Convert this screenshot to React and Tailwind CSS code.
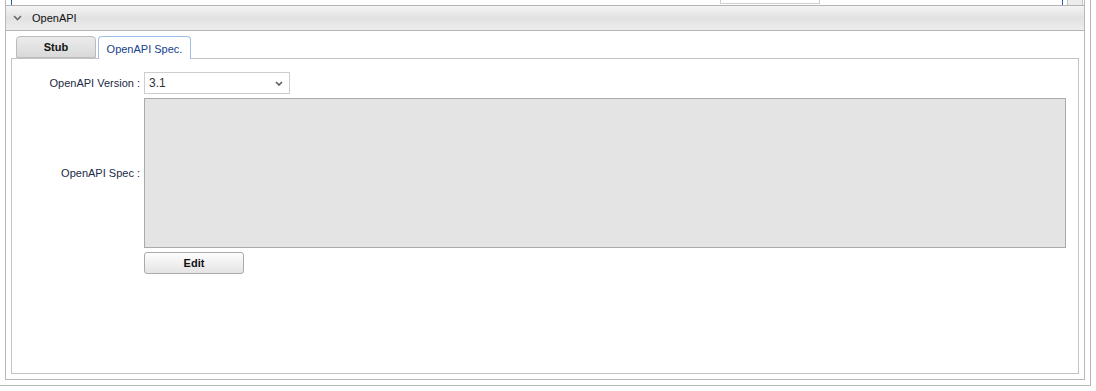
import { useState } from 'react'

// OpenAPI panel: collapsible header, two tabs, spec form.
function Chevron() {
  return (
    <svg width="9" height="6" viewBox="0 0 9 6" className="shrink-0">
      <polyline points="1,1 4.5,4.5 8,1" fill="none" stroke="#6b6b6b" strokeWidth="1.6" />
    </svg>
  )
}

function SelectArrow() {
  return (
    <svg width="8" height="5" viewBox="0 0 8 5">
      <polyline points="1,1 4,4 7,1" fill="none" stroke="#555" strokeWidth="1.5" />
    </svg>
  )
}

export default function App() {
  const [tab, setTab] = useState('spec')
  const [version, setVersion] = useState('3.1')

  return (
    <div className="h-[391px] w-[1096px] overflow-hidden bg-white font-['Liberation_Sans',Arial,sans-serif] text-[11px]">
      <div className="h-[386px] w-[1091px] border-b border-r border-[#b8b8b8]">
        <div className="ml-[5px] flex h-[380px] w-[1080px] flex-col border-x border-b border-[#b8b8b8]">
          {/* tail of the grid above */}
          <div className="flex h-[5px] shrink-0">
            <div className="ml-[5px] w-px bg-[#1b5fb5]" />
            <div className="ml-[708px] h-[4px] w-[100px] border-x border-b border-[#cfcfcf]" />
            <div className="ml-[242px] w-px bg-[#1b5fb5]" />
            <div className="ml-[4px] h-[5px] w-[16px] border-x border-[#c4c4c4] bg-[#ececec]" />
          </div>

          {/* header */}
          <div className="flex h-[26px] shrink-0 items-center gap-[10px] border-y border-[#b3b3b3] bg-gradient-to-b from-[#f4f4f4] via-[#e2e2e2] to-[#ededed] pl-[7px]">
            <Chevron />
            <span className="text-[11px] text-[#111]">OpenAPI</span>
          </div>

          {/* body */}
          <div className="flex flex-1 flex-col px-[5px] pb-[5px] pt-[5px]">
            <div className="relative z-10 flex h-[23px] shrink-0 items-stretch gap-[2px] pl-[5px]">
              <button
                onClick={() => setTab('stub')}
                className={
                  tab === 'stub'
                    ? 'w-[80px] rounded-t-[4px] border border-b-0 border-[#9cc0e8] bg-white pt-[2px] text-[11px] text-[#15428b]'
                    : 'mb-px w-[80px] rounded-t-[4px] border border-[#bcbcbc] bg-gradient-to-b from-[#ececec] to-[#d9d9d9] pt-[1px] text-[11px] font-bold text-[#111]'
                }
              >
                Stub
              </button>
              <button
                onClick={() => setTab('spec')}
                className={
                  tab === 'spec'
                    ? 'w-[93px] rounded-t-[4px] border border-b-0 border-[#9cc0e8] bg-white pt-[2px] text-[11px] text-[#15428b]'
                    : 'mb-px w-[93px] rounded-t-[4px] border border-[#bcbcbc] bg-gradient-to-b from-[#ececec] to-[#d9d9d9] pt-[1px] text-[11px] font-bold text-[#111]'
                }
              >
                OpenAPI Spec.
              </button>
            </div>

            <div className="-mt-px flex flex-1 flex-col gap-[4px] border border-[#c4c4c4] pt-[13px]">
              <div className="flex items-center">
                <label className="w-[132px] shrink-0 pr-[4px] text-right text-[11px] text-[#1c2a45]">
                  OpenAPI Version :
                </label>
                <div className="flex h-[22px] w-[146px] items-center justify-between border border-[#cdcdcd] bg-white pl-[4px] pr-[6px]">
                  <span className="text-[12px] text-[#333]">{version}</span>
                  <SelectArrow />
                </div>
              </div>

              <div className="flex items-center">
                <label className="w-[132px] shrink-0 pr-[4px] text-right text-[11px] text-[#1c2a45]">
                  OpenAPI Spec :
                </label>
                <div className="h-[150px] w-[922px] border border-[#aaaaaa] bg-[#e4e4e4]" />
              </div>

              <div className="flex">
                <div className="w-[132px] shrink-0" />
                <button
                  onClick={() => setVersion(version)}
                  className="h-[22px] w-[100px] rounded-[3px] border border-[#ababab] bg-gradient-to-b from-[#fdfdfd] to-[#e4e4e4] text-[11px] font-bold text-[#111]"
                >
                  Edit
                </button>
              </div>
            </div>
          </div>
        </div>
      </div>
    </div>
  )
}
